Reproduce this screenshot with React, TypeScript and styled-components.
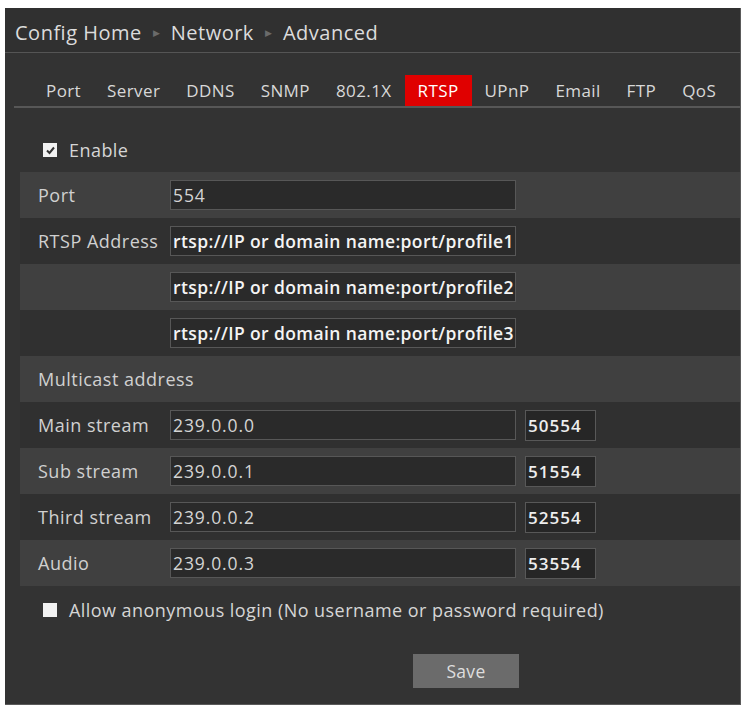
import React from "react";
import styled, { createGlobalStyle } from "styled-components";

const Global = createGlobalStyle`
  html, body { margin: 0; padding: 0; background: #ffffff; }
  body { font-family: "Open Sans", "Noto Sans", sans-serif; }
  * { box-sizing: border-box; }
`;

const Page = styled.div`
  padding: 8px 2px 2px 5px;
  width: 743px;
  height: 707px;
`;

const Panel = styled.div`
  width: 736px;
  height: 697px;
  background: #333333;
  border-right: 1px solid #5a5a5a;
  border-bottom: 1px solid #5a5a5a;
  display: flex;
  flex-direction: column;
`;

const Header = styled.div`
  height: 45px;
  display: flex;
  align-items: center;
  gap: 11px;
  padding: 4px 0 0 10px;
  border-bottom: 1px solid #555555;
  font-size: 20px;
  color: #dcdcdc;
  background: #303030;
`;

const Crumb = styled.span`
  letter-spacing: 0.5px;
`;

const Sep = styled.span`
  font-size: 9px;
  color: #6a6a6a;
`;

const TabBar = styled.div`
  margin: 22px 0 0 9px;
  padding-left: 19px;
  display: flex;
  align-items: stretch;
  height: 33px;
  border-bottom: 2px solid #575757;
`;

const Tab = styled.div<{ $active?: boolean }>`
  padding: 0 13px;
  display: flex;
  align-items: center;
  font-size: 17px;
  letter-spacing: 0.4px;
  color: ${(p) => (p.$active ? "#ffffff" : "#d8d8d8")};
  background: ${(p) => (p.$active ? "#e00000" : "transparent")};
  height: 31px;
`;

const Body = styled.div`
  padding-left: 15px;
  display: flex;
  flex-direction: column;
`;

const CheckRow = styled.label<{ $top: number; $bottom: number }>`
  display: flex;
  align-items: center;
  gap: 12px;
  padding-left: 23px;
  margin-top: ${(p) => p.$top}px;
  margin-bottom: ${(p) => p.$bottom}px;
  height: 20px;
  font-size: 18px;
  letter-spacing: 0.45px;
  color: #d6d6d6;
`;

const Box = styled.span`
  width: 14px;
  height: 14px;
  background: #f2f2f2;
  display: inline-flex;
  align-items: center;
  justify-content: center;
  flex: none;
`;

const Row = styled.div<{ $light?: boolean }>`
  height: 46px;
  display: flex;
  align-items: center;
  background: ${(p) => (p.$light ? "#404040" : "#303030")};
`;

const Label = styled.div`
  width: 150px;
  padding-left: 18px;
  font-size: 18px;
  letter-spacing: 0.5px;
  color: #d0d0d0;
  white-space: nowrap;
`;

const Field = styled.div<{ $bold?: boolean }>`
  width: 346px;
  height: 30px;
  background: #2a2a2a;
  border: 1px solid #575757;
  display: flex;
  align-items: center;
  padding-left: 2px;
  font-size: 17.5px;
  font-weight: ${(p) => (p.$bold ? 600 : 400)};
  letter-spacing: ${(p) => (p.$bold ? "0.4px" : "0.9px")};
  color: ${(p) => (p.$bold ? "#f4f4f4" : "#d4d4d4")};
  white-space: nowrap;
  overflow: hidden;
`;

const PortBox = styled.div`
  margin-left: 9px;
  width: 71px;
  height: 31px;
  background: #262626;
  border: 1px solid #585858;
  display: flex;
  align-items: center;
  padding-left: 2px;
  font-size: 17px;
  letter-spacing: 1px;
  font-weight: 600;
  color: #eeeeee;
`;

const Footer = styled.div`
  padding-left: 408px;
  margin-top: 34px;
`;

const SaveButton = styled.button`
  width: 106px;
  height: 34px;
  border: none;
  background: #6b6b6b;
  color: #dedede;
  font-family: "Open Sans", "Noto Sans", sans-serif;
  font-size: 17.5px;
  letter-spacing: 0.3px;
  padding: 0;
`;

const Check = () => (
  <svg width="11" height="11" viewBox="0 0 11 11">
    <path d="M2 5.5 L4.5 8 L9 2.5" fill="none" stroke="#333" strokeWidth="2" />
  </svg>
);

const tabs = ["Port", "Server", "DDNS", "SNMP", "802.1X", "RTSP", "UPnP", "Email", "FTP", "QoS"];

const streams = [
  { label: "Main stream", ip: "239.0.0.0", port: "50554", light: false },
  { label: "Sub stream", ip: "239.0.0.1", port: "51554", light: true },
  { label: "Third stream", ip: "239.0.0.2", port: "52554", light: false },
  { label: "Audio", ip: "239.0.0.3", port: "53554", light: true },
];

export default function App() {
  return (
    <Page>
      <Global />
      <Panel>
        <Header>
          <Crumb>Config Home</Crumb>
          <Sep>▶</Sep>
          <Crumb>Network</Crumb>
          <Sep>▶</Sep>
          <Crumb>Advanced</Crumb>
        </Header>
        <TabBar>
          {tabs.map((t) => (
            <Tab key={t} $active={t === "RTSP"}>
              {t}
            </Tab>
          ))}
        </TabBar>
        <Body>
          <CheckRow $top={32} $bottom={12}>
            <Box>
              <Check />
            </Box>
            Enable
          </CheckRow>
          <Row $light>
            <Label>Port</Label>
            <Field>554</Field>
          </Row>
          <Row>
            <Label>RTSP Address</Label>
            <Field $bold>rtsp://IP or domain name:port/profile1</Field>
          </Row>
          <Row $light>
            <Label></Label>
            <Field $bold>rtsp://IP or domain name:port/profile2</Field>
          </Row>
          <Row>
            <Label></Label>
            <Field $bold>rtsp://IP or domain name:port/profile3</Field>
          </Row>
          <Row $light>
            <Label>Multicast address</Label>
          </Row>
          {streams.map((s) => (
            <Row key={s.label} $light={s.light}>
              <Label>{s.label}</Label>
              <Field>{s.ip}</Field>
              <PortBox>{s.port}</PortBox>
            </Row>
          ))}
          <CheckRow $top={14} $bottom={0}>
            <Box />
            Allow anonymous login (No username or password required)
          </CheckRow>
        </Body>
        <Footer>
          <SaveButton>Save</SaveButton>
        </Footer>
      </Panel>
    </Page>
  );
}
